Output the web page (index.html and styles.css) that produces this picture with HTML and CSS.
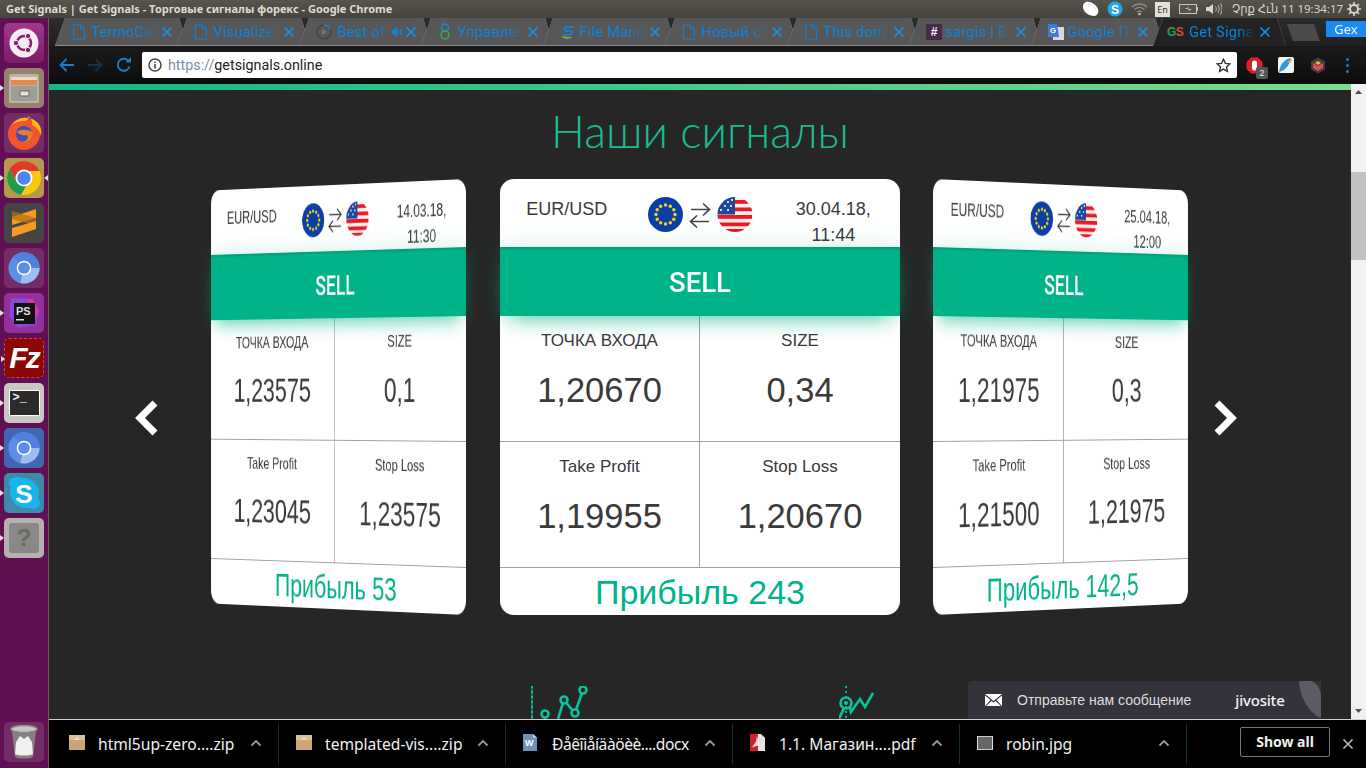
FILE: index.html
```html
<!DOCTYPE html>
<html lang="ru">
<head>
<meta charset="utf-8">
<title>Get Signals</title>
<link rel="stylesheet" href="styles.css">
</head>
<body>
<svg class="defs" width="0" height="0">
  <defs>
    <symbol id="doc" viewBox="0 0 14 16"><path d="M1.5.7h7l4 4v10.6h-11zM8.5.7v4h4" fill="none" stroke="currentColor" stroke-width="1.1"/></symbol>
    <symbol id="x" viewBox="0 0 12 12"><path d="M1.5 1.5l9 9M10.500 1.500l-9 9" fill="none" stroke="currentColor" stroke-width="1.600"/></symbol>
    <symbol id="chev" viewBox="0 0 12 8"><path d="M1.500 6.500L6 2l4.500 4.500" fill="none" stroke="currentColor" stroke-width="1.800"/></symbol>
    <symbol id="chromium" viewBox="0 0 36 36"><circle cx="18" cy="18" r="16.500" fill="#5b8ee6"/><path d="M18 18L7 5.500A16.500 16.500 0 0 1 34.500 18z" fill="#4f81dc"/><path d="M34.500 18A16.500 16.500 0 0 1 14 34L18 18z" fill="#9cbcf2"/><circle cx="18" cy="18" r="7" fill="#5b8ee6" stroke="#fff" stroke-width="1.600"/></symbol>
    <symbol id="pair" viewBox="0 0 104 35">
      <circle cx="17.500" cy="17.500" r="17.500" fill="#0a3fa6"/>
      <g fill="#f7d21c"><circle cx="17.500" cy="8" r="1.700"/><circle cx="22.300" cy="9.300" r="1.700"/><circle cx="25.800" cy="12.700" r="1.700"/><circle cx="27" cy="17.500" r="1.700"/><circle cx="25.800" cy="22.300" r="1.700"/><circle cx="22.300" cy="25.700" r="1.700"/><circle cx="17.500" cy="27" r="1.700"/><circle cx="12.700" cy="25.700" r="1.700"/><circle cx="9.200" cy="22.300" r="1.700"/><circle cx="8" cy="17.500" r="1.700"/><circle cx="9.200" cy="12.700" r="1.700"/><circle cx="12.700" cy="9.300" r="1.700"/></g>
      <path d="M43 12.500h18M55 6.500l6.500 6-6.500 6M61 24.500H43M49 18.500l-6.500 6 6.500 6" fill="none" stroke="#444" stroke-width="1.700"/>
      <clipPath id="usc"><circle cx="87" cy="17.500" r="17.500"/></clipPath>
      <g clip-path="url(#usc)"><rect x="69" width="36" height="35" fill="#f0f0f0"/><g fill="#f01622"><rect x="69" y="3" width="36" height="3.800"/><rect x="69" y="10.500" width="36" height="3.800"/><rect x="69" y="18" width="36" height="3.800"/><rect x="69" y="25.500" width="36" height="3.800"/><rect x="69" y="32" width="36" height="3"/></g><rect x="69" width="18" height="17.500" fill="#20479e"/><g fill="#fff"><circle cx="74" cy="5" r="1.100"/><circle cx="80" cy="5" r="1.100"/><circle cx="84" cy="3" r="1.100"/><circle cx="77" cy="9" r="1.100"/><circle cx="83" cy="9" r="1.100"/><circle cx="73" cy="13" r="1.100"/><circle cx="80" cy="13" r="1.100"/></g></g>
    </symbol>
  </defs>
</svg>

<div class="screen">
  <header class="titlebar">
    <span class="wintitle">Get Signals | Get Signals - Торговые сигналы форекс - Google Chrome</span>
    <div class="tray">
      <svg class="tray-ic" width="16" height="16" viewBox="0 0 16 16"><path d="M3 1c4-1 10 2 12 7 1 4-1 7-4 7-5 0-11-4-11-9 0-3 1-4 3-5z" fill="#fff"/><path d="M5 3c3 0 7 3 8 6" stroke="#bfe6fb" fill="none"/></svg>
      <svg class="tray-ic" width="16" height="16" viewBox="0 0 16 16"><circle cx="8" cy="8" r="7.500" fill="#1ea8e6"/><text x="8" y="12.500" text-anchor="middle" class="tray-s">S</text></svg>
      <svg class="tray-ic tray-wifi" width="17" height="14" viewBox="0 0 17 14"><path d="M1 5c4-4 11-4 15 0M3.500 7.500c3-2.500 7-2.500 10 0M6 10c1.500-1 3.500-1 5 0" fill="none" stroke="#8c8a84" stroke-width="1.300"/><circle cx="8.500" cy="12" r="1.300" fill="#bdbab2"/></svg>
      <span class="lang">En</span>
      <svg class="tray-ic" width="19" height="10" viewBox="0 0 19 10"><rect x=".5" y=".5" width="17" height="9" fill="#55534d" stroke="#c9c6bd"/><rect x="18" y="3" width="1" height="4" fill="#c9c6bd"/><path d="M6 5l4-2-1 2 4 0-4 2 1-2z" fill="#e0ddd4"/></svg>
      <svg class="tray-vol" width="16" height="12" viewBox="0 0 16 12"><path d="M0 4h3l4-3v10L3 8H0z" fill="#d8d5cc"/><path d="M9.500 3.500c1 1.500 1 3.500 0 5M12 2c1.500 2.500 1.500 5.500 0 8M14.500.5c2 3 2 8 0 11" stroke="#bdbab2" fill="none"/></svg>
      <span class="clock">Չրք Հւն 11 19:34:17</span>
      <svg class="tray-gear" width="14" height="14" viewBox="0 0 14 14"><circle cx="7" cy="7" r="4" fill="none" stroke="#d8d5cc" stroke-width="2"/><path d="M7 0v3M7 11v3M0 7h3M11 7h3M2 2l2 2M10 10l2 2M12 2l-2 2M4 10l-2 2" stroke="#d8d5cc" stroke-width="1.600"/></svg>
    </div>
  </header>

  <div class="desktop">
    <nav class="launcher">
      <div class="tile t-ubuntu"><svg width="30" height="30" viewBox="0 0 30 30"><circle cx="15" cy="15" r="14.500" fill="#f4eef2"/><circle cx="15" cy="15" r="7" fill="none" stroke="#8c1e74" stroke-width="2.600"/><circle cx="7" cy="15" r="2.700" fill="#8c1e74" stroke="#f4eef2"/><circle cx="19" cy="8" r="2.700" fill="#8c1e74" stroke="#f4eef2"/><circle cx="19" cy="22" r="2.700" fill="#8c1e74" stroke="#f4eef2"/></svg></div>
      <div class="tile t-files run"><svg width="34" height="34" viewBox="0 0 34 34"><rect x="2" y="3" width="30" height="29" rx="2" fill="#b7b4ae"/><rect x="4" y="6" width="26" height="8" fill="#e68a4c"/><rect x="4" y="6" width="26" height="3" fill="#f0d9b8"/><rect x="4" y="15" width="26" height="15" fill="#a09d97"/><rect x="13" y="20" width="9" height="5" rx="1" fill="#e6e4e0" stroke="#66645f"/></svg></div>
      <div class="tile t-fox"><svg width="36" height="36" viewBox="0 0 36 36"><circle cx="18" cy="19" r="16" fill="#f2552c"/><path d="M6 10C10 2 24 0 31 7c4 4 5 9 4 14-2-7-5-9-9-11 1-3-1-7-4-9 1 3-1 5-4 5-5 0-8 1-12 4z" fill="#ffb520"/><circle cx="18" cy="19" r="8" fill="#3b4fb8"/><path d="M11 17c4-3 12-3 16 1-1 7-6 10-11 9 5-1 7-4 5-7-3 1-7 0-10-3z" fill="#ef7a24"/></svg></div>
      <div class="tile t-chrome run both"><svg width="36" height="36" viewBox="0 0 36 36"><circle cx="18" cy="18" r="17" fill="#f9c80e"/><path d="M18 1A17 17 0 0 0 3.300 9.500L10 21l8-10h15.700A17 17 0 0 0 18 1z" fill="#dd3b2c"/><path d="M3.300 9.500A17 17 0 0 0 15 34.700L23 21H10z" fill="#1f9c4b"/><circle cx="18" cy="18" r="8.500" fill="#fff"/><circle cx="18" cy="18" r="6.700" fill="#4a84ee"/></svg></div>
      <div class="tile t-sublime"><svg width="28" height="30" viewBox="0 0 28 30"><path d="M26 1v9L2 17V9z" fill="#f49a25"/><path d="M2 11l24 7v-8L2 3z" fill="#b86f16" opacity=".7"/><path d="M26 13v8L2 29v-9z" fill="#f49a25"/></svg></div>
      <div class="tile t-chromium"><svg width="34" height="34"><use href="#chromium"/></svg></div>
      <div class="tile t-ps run"><svg width="34" height="34" viewBox="0 0 34 34"><path d="M4 2l22 1 6 12-3 14-18 3L2 20z" fill="#8f45d6"/><path d="M20 3l6 0 6 12-4 8z" fill="#d83a9e"/><rect x="7" y="7" width="21" height="21" fill="#111"/><text x="9" y="19" class="ps-t">PS</text><rect x="9" y="23" width="8" height="1.500" fill="#ddd"/></svg></div>
      <div class="tile t-fz run"><span class="fz">Fz</span></div>
      <div class="tile t-term run"><div class="term"><span>&gt;_</span></div></div>
      <div class="tile t-chromium2 run"><svg width="34" height="34"><use href="#chromium"/></svg></div>
      <div class="tile t-skype run"><svg width="36" height="36" viewBox="0 0 36 36"><path d="M11 2c2 0 4 1 6 1 9 0 16 7 16 15 0 2 0 3-1 5 1 2 2 3 2 5 0 4-4 6-7 6-2 0-3-1-5-1-10 1-17-6-18-15 0-2 0-3 1-5-1-2-2-3-2-5 0-4 4-6 8-6z" fill="#18b4ee"/><text x="18" y="28" text-anchor="middle" class="sk-t">S</text></svg></div>
      <div class="tile t-help run"><div class="help">?</div></div>
      <div class="tile t-trash"><svg width="30" height="36" viewBox="0 0 30 36"><ellipse cx="15" cy="5" rx="13" ry="3.500" fill="#c9c7c5" stroke="#8d8b89" stroke-width="1.500"/><path d="M3 7l3 26c4 2 14 2 18 0l3-26c-6 3-18 3-24 0z" fill="#85807f"/><path d="M7 18l4-6 4 3 4-3 4 6 1 12c-4 2-14 2-18 0z" fill="#efefef"/></svg></div>
    </nav>

    <div class="browser">
      <div class="tabstrip">
        <div class="tab"><div class="tab-in"><svg class="tab-ic ic-doc" width="14" height="16"><use href="#doc"/></svg><span class="tab-t">TermoCal</span><svg class="tab-x" width="12" height="12"><use href="#x"/></svg></div></div>
        <div class="tab"><div class="tab-in"><svg class="tab-ic ic-doc" width="14" height="16"><use href="#doc"/></svg><span class="tab-t">Visualize</span><svg class="tab-x" width="12" height="12"><use href="#x"/></svg></div></div>
        <div class="tab"><div class="tab-in"><svg class="tab-ic" width="16" height="16" viewBox="0 0 16 16"><circle cx="8" cy="8" r="7" fill="none" stroke="#444" stroke-width="1.500"/><path d="M8 1a7 7 0 0 1 6 4" fill="none" stroke="#1a86d8" stroke-width="1.500"/><path d="M6 5l5 3-5 3z" fill="#777"/></svg><span class="tab-t tab-short">Best of</span><svg class="tab-sound" width="10" height="10" viewBox="0 0 10 10"><path d="M0 3h2l3-3v10L2 7H0zM6.500 3c1 1 1 3 0 4M8 1.500c2 2 2 5 0 7" fill="#0a84e0" stroke="#0a84e0" stroke-width=".6"/></svg><svg class="tab-x" width="12" height="12"><use href="#x"/></svg></div></div>
        <div class="tab"><div class="tab-in"><svg class="tab-ic" width="14" height="17" viewBox="0 0 14 17"><circle cx="7" cy="4.500" r="3.500" fill="none" stroke="#1a8ad8" stroke-width="1.500"/><circle cx="7" cy="12" r="4" fill="none" stroke="#26b34a" stroke-width="1.500"/></svg><span class="tab-t">Управлен</span><svg class="tab-x" width="12" height="12"><use href="#x"/></svg></div></div>
        <div class="tab"><div class="tab-in"><svg class="tab-ic ic16" width="16" height="16" viewBox="0 0 16 16"><path d="M14 3H7C4 3 4 7 7 7h3c3 0 2 4-1 4H3" fill="none" stroke="#1e7ccb" stroke-width="2.200"/><path d="M1 12c4 4 9 3 11 1-3 0-6 0-11-1z" fill="#63c13c"/></svg><span class="tab-t">File Mana</span><svg class="tab-x" width="12" height="12"><use href="#x"/></svg></div></div>
        <div class="tab"><div class="tab-in"><svg class="tab-ic ic-doc" width="14" height="16"><use href="#doc"/></svg><span class="tab-t">Новый са</span><svg class="tab-x" width="12" height="12"><use href="#x"/></svg></div></div>
        <div class="tab"><div class="tab-in"><svg class="tab-ic ic-doc" width="14" height="16"><use href="#doc"/></svg><span class="tab-t">This dom</span><svg class="tab-x" width="12" height="12"><use href="#x"/></svg></div></div>
        <div class="tab"><div class="tab-in"><span class="tab-ic ic16 hash">#</span><span class="tab-t">sargis | B</span><svg class="tab-x" width="12" height="12"><use href="#x"/></svg></div></div>
        <div class="tab"><div class="tab-in"><svg class="tab-ic ic16" width="16" height="16" viewBox="0 0 16 16"><rect x="5" y="3" width="11" height="13" fill="#d8d8d8"/><path d="M0 0h9l2 13H0z" fill="#3f78e0"/><text x="2" y="9" class="gt">G</text></svg><span class="tab-t">Google П</span><svg class="tab-x" width="12" height="12"><use href="#x"/></svg></div></div>
        <div class="tab tab-active"><div class="tab-in"><span class="tab-ic gs"><span class="gs-g">G</span><span class="gs-s">S</span></span><span class="tab-t">Get Signa</span><svg class="tab-x" width="12" height="12"><use href="#x"/></svg></div></div>
        <div class="newtab"></div>
        <span class="gex">Gex</span>
      </div>

      <div class="toolbar">
        <svg class="nav-ic" width="16" height="14" viewBox="0 0 16 14"><path d="M15 7H2M7.500 1L1.500 7l6 6" fill="none" stroke="#1c7ec6" stroke-width="1.800"/></svg>
        <svg class="nav-ic nav-off" width="16" height="14" viewBox="0 0 16 14"><path d="M1 7h13M8.500 1l6 6-6 6" fill="none" stroke="#14334a" stroke-width="1.800"/></svg>
        <svg class="nav-ic" width="16" height="16" viewBox="0 0 16 16"><path d="M13.500 9.500A6 6 0 1 1 12 3.500" fill="none" stroke="#1c7ec6" stroke-width="1.900"/><path d="M9.500 5.500h5.500V0z" fill="#1c7ec6"/></svg>
        <div class="omnibox">
          <svg class="info" width="14" height="14" viewBox="0 0 14 14"><circle cx="7" cy="7" r="6" fill="none" stroke="#444" stroke-width="1.500"/><path d="M7 6v4.500M7 3.500v1.500" stroke="#444" stroke-width="1.600"/></svg>
          <span class="url"><span class="url-s">https://</span>getsignals.online</span>
          <svg class="star" width="15" height="15" viewBox="0 0 15 15"><path d="M7.500 1.300l1.900 4.100 4.400.5-3.300 3 .9 4.400-3.900-2.200-3.900 2.200.9-4.400-3.300-3 4.400-.5z" fill="none" stroke="#333" stroke-width="1.400"/></svg>
        </div>
        <div class="ext ext-red"><svg width="17" height="17" viewBox="0 0 17 17"><path d="M5 .5h7L16.500 5v7L12 16.500H5L.5 12V5z" fill="#d8232a"/><rect x="6" y="3.500" width="5" height="10" rx="2.500" fill="#fff"/></svg><span class="badge">2</span></div>
        <div class="ext"><svg width="16" height="16" viewBox="0 0 16 16"><rect width="16" height="16" rx="2" fill="#f2f2f2"/><path d="M1 15C2 7 7 2 13 1c-1 5-4 12-12 14z" fill="#2b9be0"/><path d="M9 5l5-3-1 4z" fill="#f4b33c"/></svg></div>
        <div class="ext"><svg width="16" height="17" viewBox="0 0 16 17"><path d="M8 .5l7 4v8l-7 4-7-4v-8z" fill="#3e3e44"/><path d="M3 6l5 3 5-3v5l-5 3-5-3z" fill="#e5484d"/><path d="M5 6l3 2 3-2-3-2z" fill="#f5b23c"/></svg></div>
        <div class="menu-dots"><i></i><i></i><i></i></div>
      </div>

      <div class="viewport">
        <main class="page">
          <div class="topline"></div>
          <h1 class="page-title">Наши сигналы</h1>
          <section class="slider">
            <svg class="arrow arrow-l" width="26" height="36" viewBox="0 0 26 36"><path d="M21 3L6 18l15 15" fill="none" stroke="#fff" stroke-width="7"/></svg>
            <div class="slot slot-l">
              <article class="card card-left">
                <div class="card-head"><span>EUR/USD</span><svg class="pair" width="104" height="35"><use href="#pair"/></svg><span class="date">14.03.18,<br>11:30</span></div>
                <div class="signal">SELL</div>
                <div class="cells">
                  <div class="cell"><span class="label">ТОЧКА ВХОДА</span><span class="value">1,23575</span></div>
                  <div class="cell"><span class="label">SIZE</span><span class="value">0,1</span></div>
                  <div class="cell"><span class="label">Take Profit</span><span class="value">1,23045</span></div>
                  <div class="cell"><span class="label">Stop Loss</span><span class="value">1,23575</span></div>
                </div>
                <div class="profit">Прибыль 53</div>
              </article>
            </div>
            <article class="card">
              <div class="card-head"><span>EUR/USD</span><svg class="pair" width="104" height="35"><use href="#pair"/></svg><span class="date">30.04.18,<br>11:44</span></div>
              <div class="signal">SELL</div>
              <div class="cells">
                <div class="cell"><span class="label">ТОЧКА ВХОДА</span><span class="value">1,20670</span></div>
                <div class="cell"><span class="label">SIZE</span><span class="value">0,34</span></div>
                <div class="cell"><span class="label">Take Profit</span><span class="value">1,19955</span></div>
                <div class="cell"><span class="label">Stop Loss</span><span class="value">1,20670</span></div>
              </div>
              <div class="profit">Прибыль 243</div>
            </article>
            <div class="slot slot-r">
              <article class="card card-right">
                <div class="card-head"><span>EUR/USD</span><svg class="pair" width="104" height="35"><use href="#pair"/></svg><span class="date">25.04.18,<br>12:00</span></div>
                <div class="signal">SELL</div>
                <div class="cells">
                  <div class="cell"><span class="label">ТОЧКА ВХОДА</span><span class="value">1,21975</span></div>
                  <div class="cell"><span class="label">SIZE</span><span class="value">0,3</span></div>
                  <div class="cell"><span class="label">Take Profit</span><span class="value">1,21500</span></div>
                  <div class="cell"><span class="label">Stop Loss</span><span class="value">1,21975</span></div>
                </div>
                <div class="profit">Прибыль 142,5</div>
              </article>
            </div>
            <svg class="arrow arrow-r" width="26" height="36" viewBox="0 0 26 36"><path d="M5 3l15 15L5 33" fill="none" stroke="#fff" stroke-width="7"/></svg>
          </section>
          <section class="features">
            <svg width="58" height="50" viewBox="0 0 58 50" class="feat-ic"><path d="M2 0v50" stroke="#0cc29c" stroke-width="2" stroke-dasharray="2 3" fill="none"/><path d="M2 0v50" stroke="#0cc29c" stroke-width="1" fill="none"/><g fill="none" stroke="#0cc29c" stroke-width="2.600"><circle cx="15" cy="28" r="3.500"/><circle cx="34" cy="14" r="3.500"/><circle cx="45" cy="27" r="3.500"/><circle cx="53" cy="4" r="3.500"/><path d="M28 33l5-16M36.500 17l6.500 8M46 24l6-17"/><path d="M15 32v18"/></g></svg>
            <svg width="36" height="50" viewBox="0 0 36 50" class="feat-ic"><path d="M7 0v50" stroke="#0cc29c" stroke-width="1.800" stroke-dasharray="2 3" fill="none"/><g fill="none" stroke="#0cc29c" stroke-width="2.600"><circle cx="7" cy="17" r="5.500"/><path d="M0 33l5-11M11 21l1 5 9-13 5 8 8-14"/></g><circle cx="7" cy="17" r="2" fill="#0cc29c"/></svg>
          </section>
        </main>
        <aside class="scrollbar">
          <svg class="sb-arrow" width="15" height="17" viewBox="0 0 15 17"><path d="M4 10l3.500-4 3.500 4z" fill="#505050"/></svg>
          <div class="sb-thumb"></div>
          <svg class="sb-arrow sb-down" width="15" height="17" viewBox="0 0 15 17"><path d="M4 7l3.500 4 3.500-4z" fill="#505050"/></svg>
        </aside>
        <div class="chat">
          <svg width="17" height="12" viewBox="0 0 17 12"><path d="M0 0h17L8.500 7z" fill="#fff"/><path d="M0 1.500V12l5.500-6zM17 1.500V12l-5.500-6zM1 12h15L10.500 7 8.500 8.500 6.500 7z" fill="#fff"/></svg>
          <span class="chat-t">Отправьте нам сообщение</span>
          <span class="chat-b">jivosite</span>
          <svg class="chat-curl" width="22" height="37" viewBox="0 0 22 37"><path d="M0 0h12c6 2 10 8 10 16v21c-12-5-21-20-22-37z" fill="#5c5b62"/></svg>
        </div>
      </div>

      <footer class="downloads">
        <div class="dl"><svg class="dl-ic" width="16" height="15" viewBox="0 0 16 18" preserveAspectRatio="none"><rect width="16" height="18" rx="1" fill="#c9a577"/><path d="M0 0h16v6H0z" fill="#dcc09a"/><path d="M7 3h2v2h2v1H5V5h2z" fill="#efe1cb"/></svg><span class="dl-t">html5up-zero....zip</span><svg class="dl-c" width="12" height="8"><use href="#chev"/></svg></div>
        <div class="dl"><svg class="dl-ic" width="16" height="15" viewBox="0 0 16 18" preserveAspectRatio="none"><rect width="16" height="18" rx="1" fill="#c9a577"/><path d="M0 0h16v6H0z" fill="#dcc09a"/><path d="M7 3h2v2h2v1H5V5h2z" fill="#efe1cb"/></svg><span class="dl-t">templated-vis....zip</span><svg class="dl-c" width="12" height="8"><use href="#chev"/></svg></div>
        <div class="dl"><svg class="dl-ic" width="14" height="17" viewBox="0 0 14 18" preserveAspectRatio="none"><path d="M0 0h10l4 4v14H0z" fill="#6e93b8"/><path d="M10 0l4 4h-4z" fill="#c6d5e3"/><text x="2" y="13" class="dl-w">W</text></svg><span class="dl-t dl-tight">Ðåêîìåíäàöèè....docx</span><svg class="dl-c" width="12" height="8"><use href="#chev"/></svg></div>
        <div class="dl"><svg class="dl-ic" width="15" height="17" viewBox="0 0 15 18" preserveAspectRatio="none"><path d="M0 0h11l4 4v14H0z" fill="#e8e3e3"/><path d="M0 0h8v18H0z" fill="#c8242b"/><path d="M2 14l4-6 1-6 3 10z" fill="#fff" opacity=".8"/></svg><span class="dl-t">1.1. Магазин....pdf</span><svg class="dl-c" width="12" height="8"><use href="#chev"/></svg></div>
        <div class="dl"><svg class="dl-ic" width="16" height="14" viewBox="0 0 16 16" preserveAspectRatio="none"><rect x=".5" y=".5" width="15" height="15" fill="#666" stroke="#ddd"/></svg><span class="dl-t">robin.jpg</span><svg class="dl-c" width="12" height="8"><use href="#chev"/></svg></div>
        <button class="showall">Show all</button>
        <svg class="dl-close" width="12" height="12"><use href="#x"/></svg>
      </footer>
    </div>
  </div>
</div>
</body>
</html>
```

FILE: styles.css
```css
* { box-sizing: border-box; }
html, body { margin: 0; padding: 0; height: 100%; overflow: hidden; background: #262626; }
body { font-family: "Liberation Sans", Arial, sans-serif; }
.defs { position: absolute; }

.screen { width: 1366px; height: 768px; display: flex; flex-direction: column; overflow: hidden; }

/* Window title bar + tray */
.titlebar { height: 18px; flex: none; display: flex; align-items: center; justify-content: space-between; padding-left: 6px;
  background: linear-gradient(#56544c, #44433d); color: #dfdbd2; }
.wintitle { font: 700 11px/18px "Noto Sans", sans-serif; }
.tray { display: flex; align-items: center; }
.tray-ic { margin-right: 8px; flex: none; }
.tray-wifi { margin-right: 7px; }
.tray-s { font: 700 12px "Liberation Sans", sans-serif; fill: #fff; }
.lang { width: 15px; height: 15px; background: #e4e0d6; color: #333; font: 9px/15px "Noto Sans", sans-serif; text-align: center; margin: 0 9px 0 0; flex: none; }
.tray-vol { flex: none; }
.clock { font: 11.5px/18px "Noto Sans", "DejaVu Sans", sans-serif; color: #d8d5cc; margin: 0 8px 0 10px; width: 107px; white-space: nowrap; flex: none; }
.tray-gear { margin: 0 5px 0 0; flex: none; }

.desktop { flex: 1; display: flex; min-height: 0; }

/* Launcher */
.launcher { width: 49px; flex: none; background: #5f1053; border-right: 1px solid #6c5a68; display: flex; flex-direction: column; align-items: flex-start; padding: 5px 0 6px 4px; gap: 5px; }
.tile { width: 40px; height: 40px; border-radius: 5px; display: flex; align-items: center; justify-content: center; position: relative; flex: none; overflow: visible; }
.run::before { content: ""; position: absolute; left: -4px; top: 17px; border: 3px solid transparent; border-left: 4px solid #ddd; }
.both::after { content: ""; position: absolute; right: -4px; top: 17px; border: 3px solid transparent; border-right: 4px solid #ddd; }
.t-ubuntu { background: linear-gradient(#a0388c, #7d1c6b); }
.t-files { background: #96806f; }
.t-fox, .t-chromium, .t-trash { background: rgba(255,255,255,.12); }
.t-chrome { background: #b39a50; }
.t-sublime { background: #444; }
.t-ps { background: #92309c; }
.t-fz { background: #8c0606; border: 1px dashed #c44; }
.fz { font: italic 700 30px/36px "Liberation Sans", sans-serif; color: #fff; letter-spacing: -2px; }
.ps-t { font: 700 11px "Liberation Sans", sans-serif; fill: #ddd; }
.t-term { background: #c9c6c4; }
.term { width: 31px; height: 26px; background: #2b2b2b; border: 1px solid #fff; color: #eee; font: 700 12px/14px "Liberation Mono", monospace; padding-left: 3px; }
.t-chromium2 { background: #3f68b0; }
.t-skype { background: #3e8aa8; }
.sk-t { font: 700 26px "Liberation Sans", sans-serif; fill: #fff; }
.t-help { background: #b5b1b0; }
.help { width: 30px; height: 30px; border-radius: 3px; background: #8a8886; color: #6a6866; font: 700 24px/30px "Liberation Sans", sans-serif; text-align: center; }
.t-trash { margin-top: auto; }

/* Browser */
.browser { flex: 1; min-width: 0; display: flex; flex-direction: column; }

.tabstrip { height: 28px; flex: none; display: flex; padding-left: 6px; background: linear-gradient(#2c2c2c, #1f1f1f); position: relative; }
.tab { width: 133px; height: 28px; flex: none; margin-right: -11px; filter: drop-shadow(0 0 .6px #aaa); }
.tab-in { height: 28px; display: flex; align-items: center; padding: 0 15px 0 17px; background: #575757; border-bottom: 1px solid #8d8d8d;
  clip-path: polygon(10px 0, 124px 0, 133px 100%, 0 100%); color: #0a84e0; }
.tab-ic { flex: none; margin-right: 5px; }
.ic16 { margin-right: 3px; }
.ic-doc { margin-right: 5px; color: #0a7ed8; }
.tab-t { font: 14.5px/26px Roboto, sans-serif; letter-spacing: .3px; white-space: nowrap; overflow: hidden; flex: 1; min-width: 0; padding-top: 2px;
  -webkit-mask-image: linear-gradient(90deg, #000 75%, transparent 100%); mask-image: linear-gradient(90deg, #000 75%, transparent 100%); margin-right: 4px; }
.tab-short { margin-right: 2px; }
.tab-sound { flex: none; margin-right: 3px; }
.tab-x { flex: none; color: #1194f0; }
.hash { width: 16px; height: 16px; background: #4a2a4a; color: #fff; font: 700 12px/16px "Liberation Sans", sans-serif; text-align: center; }
.gt { font: 700 8px "Liberation Sans", sans-serif; fill: #fff; }
.gs { font: 700 12px/16px "Liberation Sans", sans-serif; width: 16px; margin: 0 6px 0 -3px; white-space: nowrap; letter-spacing: -.5px; }
.gs-g { color: #1da35a; }
.gs-s { color: #e0463a; }
.tab-active .tab-in { background: #232323; border-bottom: 0; }
.newtab { width: 33px; height: 17px; margin: 6px 0 0 12px; background: #4a4a4a; flex: none; clip-path: polygon(0 0, 27px 0, 33px 100%, 6px 100%); }
.gex { position: absolute; right: 0; top: 3px; width: 40px; height: 16px; background: #1a8cf0; color: #f2f2f2; font: 13px/16px "Noto Sans", sans-serif; text-align: center; }

.toolbar { height: 38px; flex: none; display: flex; align-items: center; padding-left: 10px; background: linear-gradient(#1a1a1a, #0d0d0d); }
.nav-ic { flex: none; margin-right: 12px; }
.nav-off { margin-right: 13px; }
.omnibox { width: 1095px; height: 26px; margin-left: -2px; background: #fff; border-radius: 2px; display: flex; align-items: center; padding: 0 6px 0 6px; flex: none; }
.info { flex: none; }
.url { margin-left: 6px; flex: 1; font: 14.3px/25px Roboto, sans-serif; color: #222; white-space: nowrap; }
.url-s { color: #7a8fa8; }
.star { flex: none; }
.ext { width: 17px; height: 17px; flex: none; margin-left: 15px; position: relative; }
.ext-red { margin-left: 9px; }
.badge { position: absolute; left: 10px; top: 10px; width: 12px; height: 12px; background: #555; border-radius: 2px; color: #eee; font: 9px/12px "Liberation Sans", sans-serif; text-align: center; }
.menu-dots { margin-left: 19px; display: flex; flex-direction: column; gap: 3px; }
.menu-dots i { width: 3px; height: 3px; border-radius: 50%; background: #1c7ec6; display: block; }

/* Page viewport */
.viewport { flex: 1; min-height: 0; display: flex; position: relative; overflow: hidden; }
.page { flex: 1; min-width: 0; background: #262626; overflow: hidden; }
.topline { height: 6px; background: linear-gradient(90deg, #17b488, #7bdc8c); }
.page-title { margin: 14px 0 0; height: 75px; font: 300 45px/54px Lato, sans-serif; color: #19bc90; text-align: center; }

.slider { display: flex; align-items: flex-start; padding-left: 85px; height: 436px; }
.arrow { flex: none; margin-top: 221px; }
.arrow-l { margin-right: 52px; }
.arrow-r { margin-left: 25px; }
.slot { width: 254px; height: 436px; flex: none; }
.slot-l { margin-right: 34px; }
.slot-r { margin-left: 33px; }

.card { width: 400px; height: 436px; flex: none; background: #fff; border-radius: 14px; color: #3a3a3a; display: flex; flex-direction: column; }
.card-left { transform-origin: 100% 50%; margin-left: -146px; transform: perspective(5300px) rotateY(-47.700deg); }
.card-right { transform-origin: 0 50%; transform: perspective(5300px) rotateY(47.700deg); }

.card-head { height: 68px; flex: none; display: grid; grid-template-columns: repeat(3, 1fr); padding-top: 17px; font-size: 18px; line-height: 26px; text-align: center; }
.pair { justify-self: center; margin-top: 1px; }
.date { white-space: nowrap; }

.signal { height: 69px; flex: none; background: #00b388; color: #fff; font: 500 27.500px/71px Roboto, sans-serif; text-align: center; position: relative; z-index: 1;
  box-shadow: 0 10px 22px -10px rgba(0,179,136,.75), 0 0 24px rgba(0,179,136,.18), inset 0 2px 2px rgba(0,0,0,.12); }

.cells { height: 252px; flex: none; display: grid; grid-template-columns: 1fr 1fr; grid-template-rows: 126px 126px; }
.cell { display: flex; flex-direction: column; align-items: center; padding-top: 15px; border-bottom: 1px solid #a0a0a0; }
.cell:nth-child(odd) { border-right: 1px solid #a0a0a0; }
.label { font-size: 17px; line-height: 20px; }
.value { font-size: 34.500px; line-height: 40px; margin-top: 19px; }
.profit { flex: 1; font-size: 34px; line-height: 49px; color: #00b388; text-align: center; }

.features { display: flex; gap: 251px; padding: 71px 0 0 481px; }
.feat-ic { flex: none; display: block; }

.scrollbar { width: 15px; flex: none; background: #f1f1f1; display: flex; flex-direction: column; }
.sb-arrow { flex: none; display: block; }
.sb-thumb { height: 88px; margin-top: 71px; background: #c1c1c1; flex: none; }
.sb-down { margin-top: auto; }

.chat { position: absolute; right: 45px; bottom: 0; width: 353px; height: 38px; background: #34333b; border-radius: 4px 0 0 0; display: flex; align-items: center; padding-left: 17px; color: #dcdcdc; }
.chat svg { flex: none; }
.chat-t { font-size: 14px; margin-left: 15px; }
.chat-b { font: 500 15px "Noto Sans", sans-serif; color: #f2f2f2; margin-left: 44px; letter-spacing: -.2px; }
.chat-curl { position: absolute; right: 0; top: 0; }

/* Downloads bar */
.downloads { height: 49px; flex: none; display: flex; align-items: center; padding-left: 3px; background: #000; border-top: 1px solid #cfcfcf; color: #f1f1f1; }
.dl { width: 227px; height: 40px; flex: none; position: relative; display: flex; align-items: center; padding-left: 17px; padding-bottom: 3px; border-right: 1px solid #12303a; }
.dl-ic { flex: none; }
.dl-w { font: 700 9px "Liberation Sans", sans-serif; fill: #fff; }
.dl-t { position: absolute; left: 46px; font: 15.600px/20px "Noto Sans", sans-serif; white-space: nowrap; top: 10px; }
.dl-tight { letter-spacing: -.45px; }
.dl-c { position: absolute; left: 198px; top: 15px; color: #9a9a9a; }
.showall { width: 90px; height: 30px; margin: 0 0 5px 53px; flex: none; background: #000; border: 1px solid #777; border-radius: 2px; color: #f1f1f1; font: 700 14px "Noto Sans", sans-serif; padding: 0; }
.dl-close { flex: none; margin: 0 0 0 12px; color: #bbb; }
```
